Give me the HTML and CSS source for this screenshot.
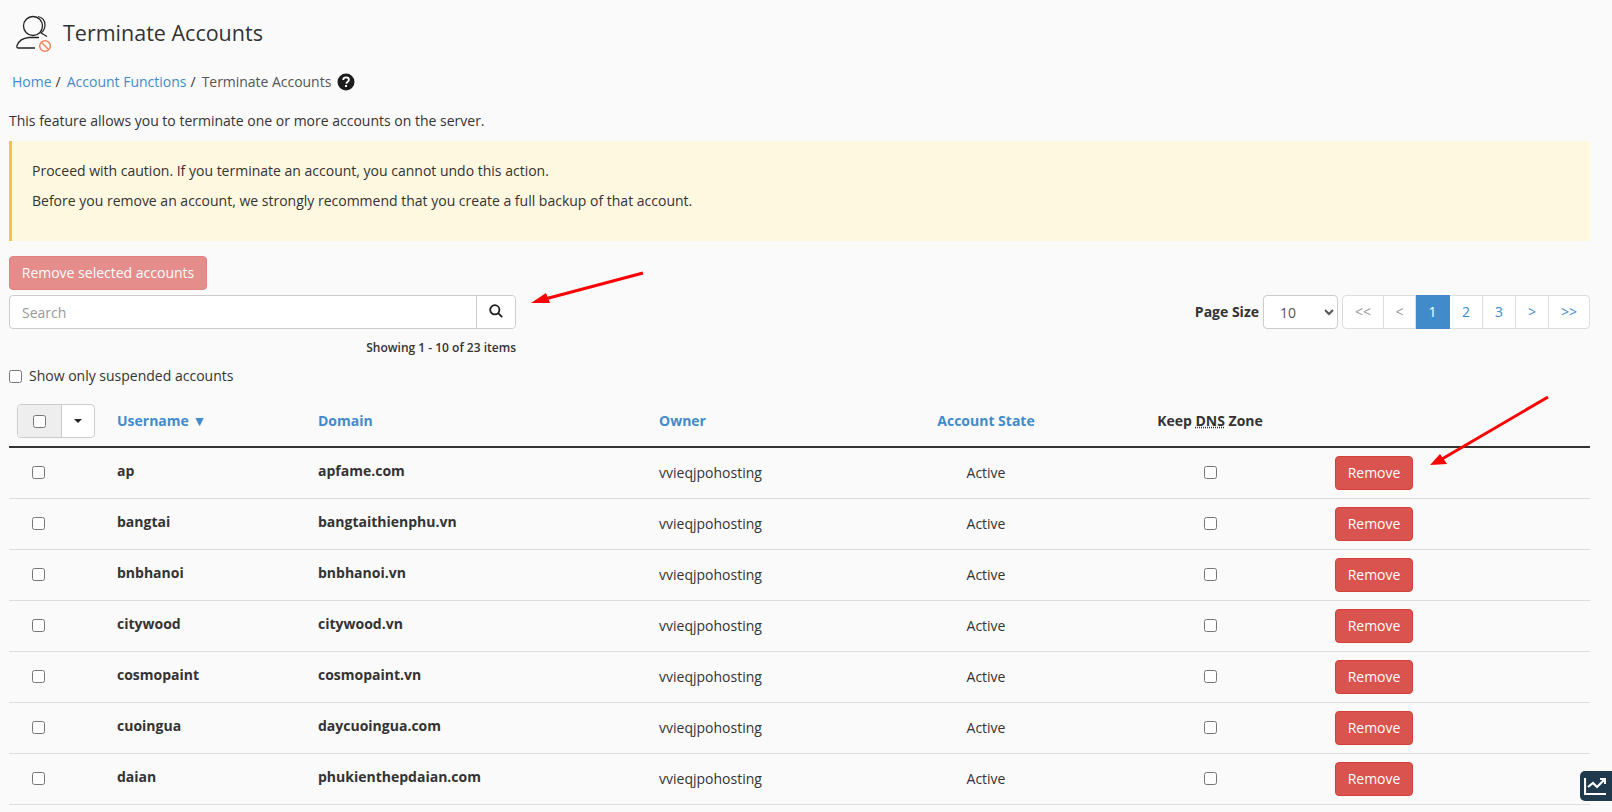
FILE: index.html
```html
<!DOCTYPE html>
<html lang="en">
<head>
    <meta charset="UTF-8">
    <title>Terminate Accounts</title>
    <link rel="stylesheet" href="styles.css">
</head>
<body>
    <header class="page-title">
        <svg class="title-icon" width="44" height="44" viewBox="0 0 44 44" fill="none">
            <circle cx="20" cy="13" r="9.5" stroke="#222" stroke-width="1.3"/>
            <path d="M25 3.5c4.5 1 7 4.5 7 8.500 0 3.500-1.500 6-4 8l6 3.500" stroke="#222" stroke-width="1.2"/>
            <path d="M22 35H5.500c-1.500 0-2-1-1.500-2.500C6 27 11 25 16 24.500h10" stroke="#222" stroke-width="1.3"/>
            <circle cx="32" cy="33" r="5.300" stroke="#f0845c" stroke-width="1.500"/>
            <path d="M28.300 29.300l7.400 7.400" stroke="#f0845c" stroke-width="1.500"/>
        </svg>
        <h1>Terminate Accounts</h1>
    </header>

    <nav class="breadcrumb">
        <a href="#">Home</a><span class="sep">/</span>
        <a href="#">Account Functions</a><span class="sep">/</span>
        <span class="current">Terminate Accounts</span>
        <svg class="help-icon" width="18" height="18" viewBox="0 0 18 18">
            <circle cx="9" cy="9" r="8.500" fill="#1c1c1c"/>
            <path d="M6.200 7c.1-1.700 1.300-2.600 2.900-2.600 1.600 0 2.800 1 2.800 2.400 0 1.200-.7 1.800-1.500 2.300-.6.400-.9.700-.9 1.300v.3" fill="none" stroke="#fff" stroke-width="1.800"/>
            <rect x="8" y="12" width="2" height="2" fill="#fff"/>
        </svg>
    </nav>

    <p class="intro">This feature allows you to terminate one or more accounts on the server.</p>

    <div class="callout">
        <p>Proceed with caution. If you terminate an account, you cannot undo this action.</p>
        <p>Before you remove an account, we strongly recommend that you create a full backup of that account.</p>
    </div>

    <button class="btn btn-danger bulk-remove">Remove selected accounts</button>

    <div class="toolbar">
        <div class="search-col">
            <div class="search-box">
                <input type="text" placeholder="Search">
                <button class="search-btn" aria-label="Search">
                    <svg width="14" height="14" viewBox="0 0 14 14" fill="none" stroke="#1c1c1c" stroke-width="1.800">
                        <circle cx="5.800" cy="5.800" r="4.600"/>
                        <path d="M9.200 9.200l4 4"/>
                    </svg>
                </button>
            </div>
            <div class="showing">Showing 1 - 10 of 23 items</div>
        </div>
        <div class="paging">
            <label class="page-size-label">Page Size</label>
            <select class="page-size">
                <option>10</option>
                <option>20</option>
                <option>50</option>
            </select>
            <ul class="pagination">
                <li class="off wide-first">&lt;&lt;</li>
                <li class="off">&lt;</li>
                <li class="on">1</li>
                <li>2</li>
                <li>3</li>
                <li>&gt;</li>
                <li class="wide-last">&gt;&gt;</li>
            </ul>
        </div>
    </div>

    <label class="suspended"><input type="checkbox"> Show only suspended accounts</label>

    <table class="accounts">
        <colgroup>
            <col class="c-check"><col class="c-user"><col class="c-domain"><col class="c-owner"><col class="c-state"><col class="c-dns"><col class="c-action">
        </colgroup>
        <thead>
            <tr>
                <th>
                    <div class="check-group">
                        <span class="check-cell"><input type="checkbox"></span>
                        <span class="caret-cell"><i class="caret"></i></span>
                    </div>
                </th>
                <th><a href="#">Username ▼</a></th>
                <th><a href="#">Domain</a></th>
                <th><a href="#">Owner</a></th>
                <th class="center"><a href="#">Account State</a></th>
                <th class="center">Keep <abbr>DNS</abbr> Zone</th>
                <th></th>
            </tr>
        </thead>
        <tbody>
            <tr>
                <td class="check"><input type="checkbox"></td>
                <td class="name">ap</td>
                <td class="name">apfame.com</td>
                <td>vvieqjpohosting</td>
                <td class="center">Active</td>
                <td class="center"><input type="checkbox"></td>
                <td class="action"><button class="btn btn-danger">Remove</button></td>
            </tr>
            <tr>
                <td class="check"><input type="checkbox"></td>
                <td class="name">bangtai</td>
                <td class="name">bangtaithienphu.vn</td>
                <td>vvieqjpohosting</td>
                <td class="center">Active</td>
                <td class="center"><input type="checkbox"></td>
                <td class="action"><button class="btn btn-danger">Remove</button></td>
            </tr>
            <tr>
                <td class="check"><input type="checkbox"></td>
                <td class="name">bnbhanoi</td>
                <td class="name">bnbhanoi.vn</td>
                <td>vvieqjpohosting</td>
                <td class="center">Active</td>
                <td class="center"><input type="checkbox"></td>
                <td class="action"><button class="btn btn-danger">Remove</button></td>
            </tr>
            <tr>
                <td class="check"><input type="checkbox"></td>
                <td class="name">citywood</td>
                <td class="name">citywood.vn</td>
                <td>vvieqjpohosting</td>
                <td class="center">Active</td>
                <td class="center"><input type="checkbox"></td>
                <td class="action"><button class="btn btn-danger">Remove</button></td>
            </tr>
            <tr>
                <td class="check"><input type="checkbox"></td>
                <td class="name">cosmopaint</td>
                <td class="name">cosmopaint.vn</td>
                <td>vvieqjpohosting</td>
                <td class="center">Active</td>
                <td class="center"><input type="checkbox"></td>
                <td class="action"><button class="btn btn-danger">Remove</button></td>
            </tr>
            <tr>
                <td class="check"><input type="checkbox"></td>
                <td class="name">cuoingua</td>
                <td class="name">daycuoingua.com</td>
                <td>vvieqjpohosting</td>
                <td class="center">Active</td>
                <td class="center"><input type="checkbox"></td>
                <td class="action"><button class="btn btn-danger">Remove</button></td>
            </tr>
            <tr>
                <td class="check"><input type="checkbox"></td>
                <td class="name">daian</td>
                <td class="name">phukienthepdaian.com</td>
                <td>vvieqjpohosting</td>
                <td class="center">Active</td>
                <td class="center"><input type="checkbox"></td>
                <td class="action"><button class="btn btn-danger">Remove</button></td>
            </tr>
        </tbody>
    </table>

    <!-- annotation arrows drawn over the page -->
    <svg class="arrows" width="1612" height="812" viewBox="0 0 1612 812">
        <path d="M643 273L545 299" stroke="#f00" stroke-width="3"/>
        <path d="M531 303L546 293L550 303Z" fill="#f00"/>
        <path d="M1548 397L1442 459" stroke="#f00" stroke-width="3"/>
        <path d="M1430 465L1440 454L1447 464Z" fill="#f00"/>
    </svg>

    <div class="stats-tab">
        <svg width="24" height="22" viewBox="0 0 24 22" fill="none" stroke="#fff" stroke-width="2.200">
            <path d="M1 3v16h21"/>
            <path d="M4 12l5-4 4 4 7-7"/>
            <path d="M16 4h5v5" stroke-width="2"/>
        </svg>
    </div>
</body>
</html>
```

FILE: styles.css
```css
* { box-sizing: border-box; }
html, body { height: 100%; overflow: hidden; }
body { margin: 0; padding: 0 22px 0 9px; background: #fafafa; color: #333; font: 14px/20px "Open Sans", sans-serif; }
a { color: #428bca; text-decoration: none; }
p { margin: 0; }

.page-title { display: flex; align-items: center; height: 66px; padding-left: 4px; }
.title-icon { margin-top: 4px; }
.page-title h1 { margin: 0 0 0 6px; font-size: 21.5px; font-weight: 400; line-height: 30px; }

.breadcrumb { display: flex; align-items: center; height: 20px; margin-top: 6px; padding-left: 3px; }
.breadcrumb .sep { margin: 0 6px 0 4px; }
.breadcrumb .current { color: #555; letter-spacing: -.03px; }
.help-icon { margin-left: 6px; }

.intro { margin-top: 19px; }

.callout { margin-top: 10px; padding: 20px; height: 100px; background: #fff8e1; border-left: 3px solid #f9c04d; }
.callout p { margin-bottom: 10px; }

.btn { height: 34px; padding: 0 12px; border: 1px solid transparent; border-radius: 4px; font: 14px/20px "Open Sans", sans-serif; }
.btn-danger { background: #d9534f; border-color: #d43f3a; color: #fff; }
.bulk-remove { display: block; margin-top: 15px; width: 198px; padding: 0; opacity: .65; }

.toolbar { display: flex; justify-content: space-between; align-items: flex-start; margin-top: 5px; }
.search-col { width: 507px; }
.search-box { display: flex; height: 34px; background: #fff; border: 1px solid #ccc; border-radius: 4px; }
.search-box input { flex: 1; min-width: 0; padding: 0 12px; border: 0; background: transparent; font: 14px "Open Sans", sans-serif; outline: none; }
.search-box input::placeholder { color: #999; }
.search-btn { display: flex; align-items: center; justify-content: center; width: 39px; padding: 0 0 2px; border: 0; border-left: 1px solid #ccc; border-radius: 0 4px 4px 0; background: #fff; }
.showing { margin-top: 9px; text-align: right; font-size: 12px; font-weight: 600; line-height: 20px; }

.paging { display: flex; align-items: center; }
.page-size-label { margin-right: 4px; font-weight: 700; }
.page-size { width: 75px; height: 34px; margin-right: 4px; padding: 0 0 0 12px; background: #fff; border: 1px solid #ccc; border-radius: 4px; color: #555; font: 14px "Open Sans", sans-serif; }
.pagination { display: flex; margin: 0; padding: 0; list-style: none; height: 34px; background: #fff; border: 1px solid #ddd; border-radius: 4px; }
.pagination li { width: 33px; border-right: 1px solid #ddd; text-align: center; line-height: 32px; color: #428bca; }
.pagination li:last-child { border-right: 0; }
.pagination .off { color: #999; }
.pagination .off + .off { width: 32px; }
.pagination .on { width: 34px; background: #428bca; color: #fff; border-color: #428bca; margin-top: -1px; height: 34px; line-height: 34px; }
.pagination .wide-first { width: 41px; }
.pagination .wide-last { width: 40px; }

.suspended { display: flex; align-items: center; height: 20px; margin-top: 8px; }
.suspended input { width: 13px; height: 13px; margin: 0 7px 0 0; }

.accounts { width: 1581px; margin-top: 18px; border-collapse: collapse; table-layout: fixed; }
.c-check { width: 100px; }
.c-user { width: 201px; }
.c-domain { width: 341px; }
.c-owner { width: 220px; }
.c-state { width: 230px; }
.c-dns { width: 218px; }
.c-action { width: 271px; }
.accounts th { height: 43px; padding: 0 8px 8px; border-bottom: 2px solid #333; text-align: left; font-weight: 700; vertical-align: bottom; line-height: 34px; }
.accounts th.center, .accounts td.center { text-align: center; }
.accounts td { height: 51px; padding: 0 8px; border-bottom: 1px solid #ddd; vertical-align: middle; }
.accounts td input { display: block; width: 13px; height: 13px; margin: 0 auto; }
.accounts td.check input { margin: 0 0 0 15px; }
.accounts td.name { padding-bottom: 4px; font-weight: 700; }
.accounts td.action { padding-left: 16px; }
.accounts td .btn { display: block; width: 78px; padding: 0; }
abbr { text-decoration: underline dotted; }

.check-group { display: inline-flex; height: 34px; border: 1px solid #ccc; border-radius: 4px; vertical-align: top; background: #fff; }
.check-cell { display: flex; align-items: center; justify-content: center; width: 44px; background: #eee; border-right: 1px solid #ccc; border-radius: 3px 0 0 3px; }
.check-cell input { width: 13px; height: 13px; margin: 0; }
.caret-cell { display: flex; align-items: center; justify-content: center; width: 32px; }
.caret { width: 0; height: 0; border-top: 4px solid #222; border-left: 4px solid transparent; border-right: 4px solid transparent; }

.arrows { position: absolute; left: 0; top: 0; pointer-events: none; }
.stats-tab { position: fixed; right: 0; bottom: 11px; display: flex; align-items: center; justify-content: center; width: 32px; height: 30px; background: #1f3a4d; border-radius: 5px 0 0 5px; }
```
